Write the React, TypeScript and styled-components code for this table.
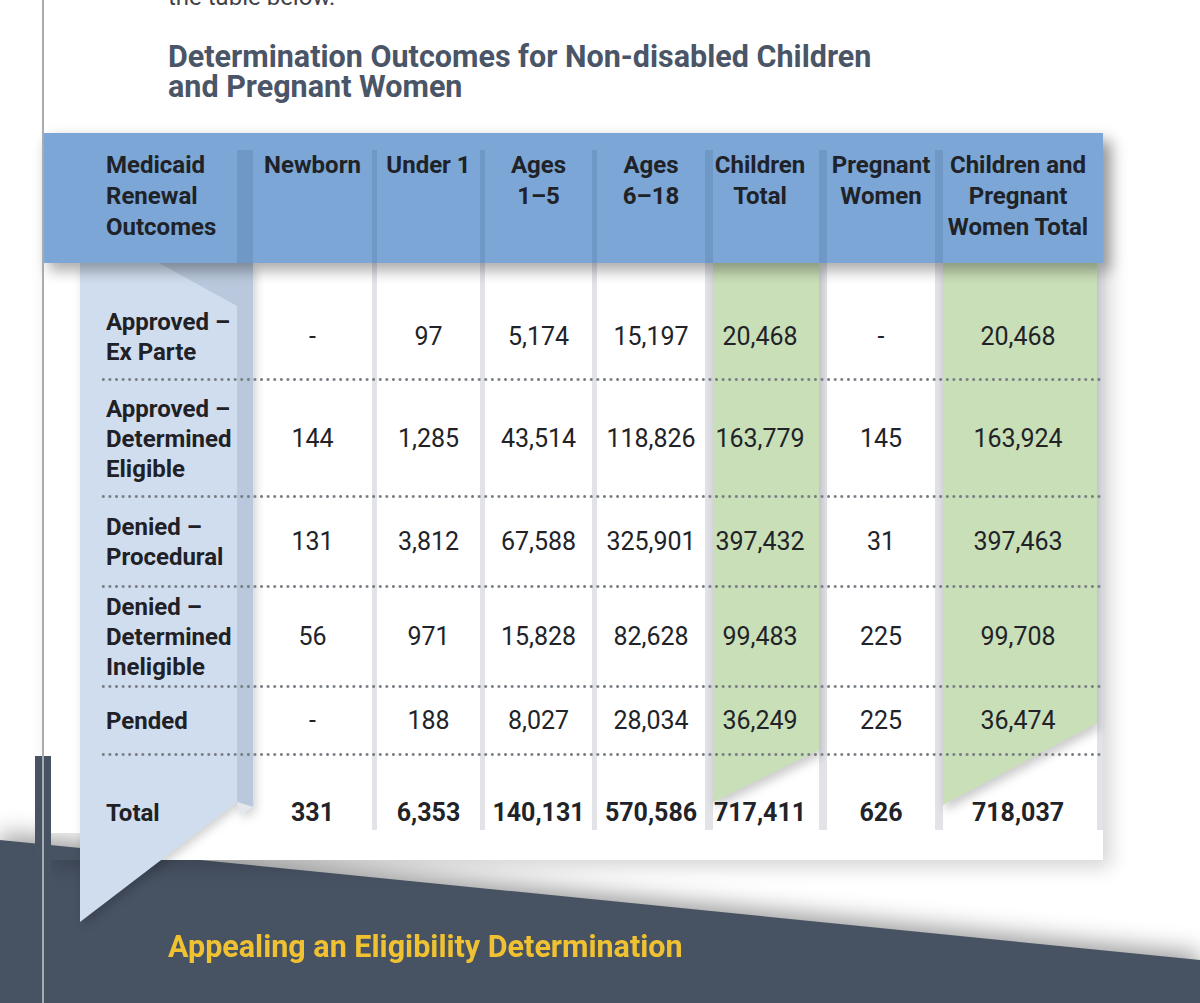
import React from 'react';
import styled, { createGlobalStyle } from 'styled-components';

const GlobalStyle = createGlobalStyle`
	body {
		margin: 0;
		background: #ffffff;
		font-family: Roboto, 'Liberation Sans', sans-serif;
	}
`;

type Col = { sep: number; w: number; pr?: number; green?: [number, number] };

// separator band + column width, measured from the left edge of the grid
const COLS: Col[] = [
	{ sep: 16, w: 119 },
	{ sep: 5, w: 103 },
	{ sep: 5, w: 107 },
	{ sep: 5, w: 108 },
	{ sep: 8, w: 106, pr: 12, green: [28, 80] },
	{ sep: 8, w: 108 },
	{ sep: 8, w: 154, pr: 4, green: [25, 107] },
];

const TEMPLATE = `137px ${COLS.map((c) => `${c.sep + c.w}px`).join(' ')}`;

const HEADERS = [
	['Newborn'],
	['Under 1'],
	['Ages', '1–5'],
	['Ages', '6–18'],
	['Children', 'Total'],
	['Pregnant', 'Women'],
	['Children and', 'Pregnant', 'Women Total'],
];

type RowData = { label: string[]; vals: string[]; h: number; pt?: number; total?: boolean };

const ROWS: RowData[] = [
	{ label: ['Approved –', 'Ex Parte'], vals: ['-', '97', '5,174', '15,197', '20,468', '-', '20,468'], h: 117, pt: 31 },
	{ label: ['Approved –', 'Determined', 'Eligible'], vals: ['144', '1,285', '43,514', '118,826', '163,779', '145', '163,924'], h: 117 },
	{ label: ['Denied –', 'Procedural'], vals: ['131', '3,812', '67,588', '325,901', '397,432', '31', '397,463'], h: 90 },
	{ label: ['Denied –', 'Determined', 'Ineligible'], vals: ['56', '971', '15,828', '82,628', '99,483', '225', '99,708'], h: 100 },
	{ label: ['Pended'], vals: ['-', '188', '8,027', '28,034', '36,249', '225', '36,474'], h: 68 },
	{ label: ['Total'], vals: ['331', '6,353', '140,131', '570,586', '717,411', '626', '718,037'], h: 75, pt: 40, total: true },
];

const App = () => {
	return (
		<>
			<GlobalStyle />
			<Page>
				<MarginRule />
				<SpineTab />
				<Intro>the table below.</Intro>
				<Title>
					Determination Outcomes for Non-disabled Children
					<br />
					and Pregnant Women
				</Title>
				<Card>
					<Ribbon width="173" height="659" viewBox="0 0 173 659">
						<polygon points="0,0 157,0 157,539 0,659" fill="#d0ddee" />
						<polygon points="157,0 173,0 173,544 157,539" fill="#b9c8dc" />
						<polygon points="157,539 173,544 160,552" fill="#e4e8ee" />
						<polygon points="79,0 157,0 157,43" fill="#b9c8dc" />
					</Ribbon>
					<HeaderBar>
						<HeadCell $sep={0} $left>
							Medicaid
							<br />
							Renewal
							<br />
							Outcomes
						</HeadCell>
						{HEADERS.map((lines, i) => (
							<HeadCell key={i} $sep={COLS[i].sep} $pr={COLS[i].pr}>
								{lines.map((l, j) => (
									<div key={j}>{l}</div>
								))}
							</HeadCell>
						))}
					</HeaderBar>
					<Body>
						<Underlay>
							<div />
							{COLS.map((c, i) => (
								<UnderCol key={i}>
									<SepBand $w={c.sep} $hidden={i === 0} />
									{c.green ? (
										<GreenWrap>
											<GreenFill $lo={c.green[0]} $hi={c.green[1]} />
										</GreenWrap>
									) : null}
								</UnderCol>
							))}
						</Underlay>
						{ROWS.map((r, i) => (
							<Row key={i} $h={r.h} $pt={r.pt || 0} $dots={!r.total}>
								<LabelCell>
									{r.label.map((l, j) => (
										<div key={j}>{l}</div>
									))}
								</LabelCell>
								{r.vals.map((v, j) => (
									<NumCell key={j} $sep={COLS[j].sep} $pr={COLS[j].pr} $bold={r.total}>
										{v}
									</NumCell>
								))}
							</Row>
						))}
					</Body>
				</Card>
				<FooterShadow>
					<Footer>
						<FooterTitle>Appealing an Eligibility Determination</FooterTitle>
					</Footer>
				</FooterShadow>
			</Page>
		</>
	);
};

const Page = styled.div`
	position: relative;
	display: flex;
	flex-direction: column;
	width: 1200px;
	height: 1003px;
	overflow: hidden;
	background: #ffffff;
`;

const MarginRule = styled.div`
	position: absolute;
	left: 42px;
	top: 0;
	bottom: 0;
	width: 2px;
	background: #a7acb3;
	z-index: 6;
`;

const SpineTab = styled.div`
	position: absolute;
	left: 35px;
	top: 756px;
	bottom: 0;
	width: 16px;
	background: #475263;
	z-index: 5;
`;

const Intro = styled.div`
	margin-top: -17px;
	padding-left: 168px;
	font-size: 24px;
	line-height: 28px;
	color: #3f4349;
`;

const Title = styled.h2`
	margin: 31px 0 0;
	padding-left: 168px;
	font-size: 30.5px;
	line-height: 30px;
	font-weight: 700;
	color: #4a5567;
`;

const Card = styled.div`
	position: relative;
	z-index: 1;
	margin: 31px 0 0 42px;
	width: 1061px;
	height: 727px;
	box-sizing: border-box;
	padding-bottom: 30px;
	background:
		linear-gradient(#ffffff, #ffffff) right top / calc(100% - 38px) 100% no-repeat,
		linear-gradient(#ffffff, #ffffff) left top / 38px 700px no-repeat;
	box-shadow: 8px 8px 18px rgba(0, 0, 0, 0.16);
	display: flex;
	flex-direction: column;
`;

const Ribbon = styled.svg`
	position: absolute;
	left: 38px;
	top: 130px;
	z-index: 1;
	filter: drop-shadow(3px 4px 5px rgba(0, 0, 0, 0.18));
`;

const HeaderBar = styled.div`
	position: relative;
	z-index: 3;
	height: 130px;
	box-sizing: border-box;
	padding: 17px 6px 0 58px;
	display: grid;
	grid-template-columns: ${TEMPLATE};
	background: #7ba6d6;
	box-shadow: 7px 8px 13px rgba(0, 0, 0, 0.32);
`;

const HeadCell = styled.div<{ $sep: number; $left?: boolean; $pr?: number }>`
	box-sizing: border-box;
	border-left: ${(p) => p.$sep}px solid rgba(40, 70, 115, 0.14);
	padding: 0 ${(p) => p.$pr || 0}px 0 ${(p) => (p.$left ? 6 : 0)}px;
	text-align: ${(p) => (p.$left ? 'left' : 'center')};
	font-size: 24px;
	font-weight: 700;
	line-height: 31px;
	color: #1f2227;
	white-space: nowrap;
`;

const Body = styled.div`
	position: relative;
	flex: 1;
	padding: 0 6px 0 58px;
	display: flex;
	flex-direction: column;
`;

const Underlay = styled.div`
	position: absolute;
	top: 0;
	bottom: 0;
	left: 58px;
	right: 0;
	display: grid;
	grid-template-columns: ${TEMPLATE} 6px;
	z-index: 0;
	&::after {
		content: '';
		background: #e1e3e7;
	}
`;

const UnderCol = styled.div`
	display: flex;
`;

const SepBand = styled.div<{ $w: number; $hidden?: boolean }>`
	width: ${(p) => p.$w}px;
	flex: none;
	background: ${(p) => (p.$hidden ? 'transparent' : '#e1e3e7')};
`;

const GreenWrap = styled.div`
	flex: 1;
	filter: drop-shadow(2px 6px 5px rgba(0, 0, 0, 0.2));
`;

const GreenFill = styled.div<{ $lo: number; $hi: number }>`
	height: 100%;
	background: #c9dfb8;
	clip-path: polygon(0 0, 100% 0, 100% calc(100% - ${(p) => p.$hi}px), 0 calc(100% - ${(p) => p.$lo}px));
`;

const Row = styled.div<{ $h: number; $pt: number; $dots: boolean }>`
	position: relative;
	z-index: 2;
	height: ${(p) => p.$h}px;
	box-sizing: border-box;
	padding-top: ${(p) => p.$pt}px;
	display: grid;
	grid-template-columns: ${TEMPLATE};
	align-items: center;
	&::after {
		content: '';
		display: ${(p) => (p.$dots ? 'block' : 'none')};
		position: absolute;
		left: 0;
		right: -6px;
		bottom: -1px;
		height: 3px;
		background: radial-gradient(circle, #767b82 1.15px, transparent 1.65px) 0 0 / 6.6px 3px repeat-x;
	}
`;

const LabelCell = styled.div`
	padding-left: 6px;
	font-size: 24px;
	font-weight: 700;
	line-height: 30px;
	color: #1f2126;
	white-space: nowrap;
`;

const NumCell = styled.div<{ $sep: number; $pr?: number; $bold?: boolean }>`
	padding: 0 ${(p) => p.$pr || 0}px 0 ${(p) => p.$sep}px;
	text-align: center;
	font-size: 25px;
	font-weight: ${(p) => (p.$bold ? 700 : 400)};
	line-height: 30px;
	color: #212328;
	white-space: nowrap;
`;

const FooterShadow = styled.div`
	margin-top: -20px;
	filter: drop-shadow(0 -6px 12px rgba(0, 0, 0, 0.4));
`;

const Footer = styled.div`
	height: 163px;
	box-sizing: border-box;
	padding: 90px 0 0 168px;
	background: #475263;
	clip-path: polygon(0 0, 100% 120px, 100% 100%, 0 100%);
`;

const FooterTitle = styled.h3`
	margin: 0;
	font-size: 30.5px;
	line-height: 34px;
	font-weight: 700;
	color: #f0c232;
`;

export default App;
